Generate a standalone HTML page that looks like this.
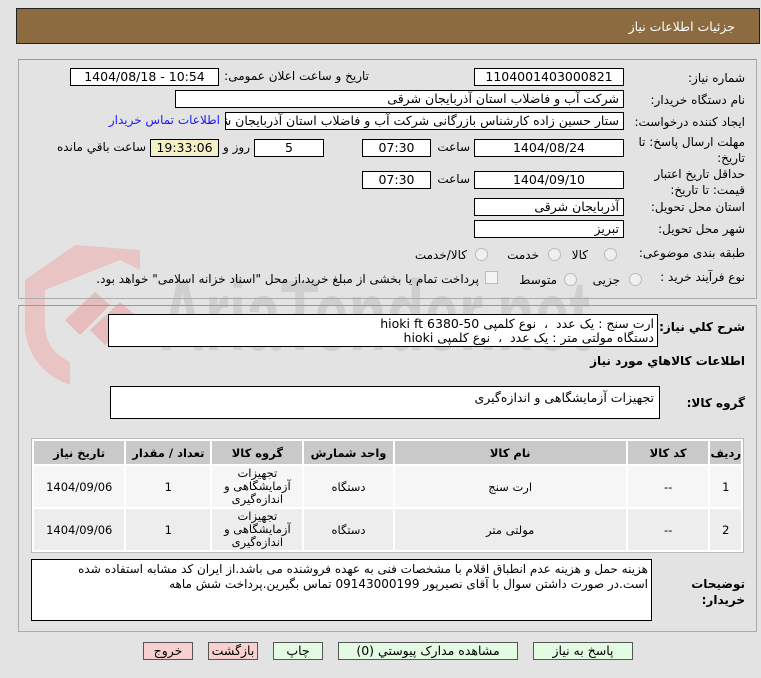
<!DOCTYPE html>
<html><head><meta charset="utf-8">
<style>
*{box-sizing:border-box;margin:0;padding:0}
body{width:761px;height:678px;background:#e3e3e3;font-family:"DejaVu Sans","Liberation Sans","Noto Sans CJK SC",sans-serif;font-size:12px;color:#000;position:relative;overflow:hidden}
.a{position:absolute}
.hdr{left:16px;top:8px;width:744px;height:36px;background:#8b6b3f;border:1px solid #222}
.hdr span{position:absolute;right:24px;top:10px;color:#fff;font-size:12.5px}
.panel{border:1px solid #aaa;border-top-color:#999}
.box{position:absolute;background:#fff;border:1px solid #000;height:18px;font-size:12.5px;line-height:16px;padding:0 4px;white-space:nowrap;overflow:hidden}
.c{text-align:center}
.r{text-align:right;direction:rtl}
.lbl{position:absolute;direction:rtl;text-align:right;font-size:12px;white-space:nowrap}
.rad{position:absolute;width:13px;height:13px;border-radius:50%;border:1px solid #bbb;background:#f0f0f0}
table{border-collapse:separate;border-spacing:2px;background:#fff}
td{text-align:center;font-size:11.5px;direction:rtl}
.btn{position:absolute;top:642px;height:18px;border:1px solid #555;font-size:12.5px;text-align:center;line-height:16px;direction:rtl}
</style></head><body>
<svg class="a" style="left:0;top:0" width="761" height="678">
<path d="M25 280 L25 330 Q30 370 70 385 L70 362 Q45 350 45 325 L45 290 L120 260 L140 270 L140 250 L75 245 Z" fill="#e8c4c4"/>
<path d="M65 320 L95 292 L110 305 L80 335 Z M90 330 L120 302 L135 315 L105 345 Z" fill="#e6bcbc"/>
<text x="160" y="350" font-family="Liberation Sans" font-weight="bold" font-size="100" fill="#cfcfcf" textLength="430" lengthAdjust="spacingAndGlyphs">AriaTender.net</text>
</svg>
<div class="a hdr"><span>جزئیات اطلاعات نیاز</span></div>
<div class="a panel" style="left:18px;top:59px;width:739px;height:240px"></div>
<div class="a panel" style="left:18px;top:305px;width:739px;height:327px"></div>

<div class="lbl" style="right:16px;top:71px">شماره نیاز:</div>
<div class="box c" style="left:474px;top:68px;width:150px">1104001403000821</div>
<div class="lbl" style="right:392px;top:69px">تاریخ و ساعت اعلان عمومی:</div>
<div class="box c" style="left:70px;top:68px;width:149px">1404/08/18 - 10:54</div>

<div class="lbl" style="right:16px;top:93px">نام دستگاه خریدار:</div>
<div class="box r" style="left:175px;top:90px;width:449px">شرکت آب و فاضلاب استان آذربایجان شرقی</div>

<div class="lbl" style="right:16px;top:115px">ایجاد کننده درخواست:</div>
<div class="box r" style="left:225px;top:112px;width:399px">ستار حسین زاده کارشناس بازرگانی شرکت آب و فاضلاب استان آذربایجان شرقی</div>
<div class="lbl" style="right:541px;top:113px;color:#1a1aff">اطلاعات تماس خریدار</div>

<div class="lbl" style="right:16px;top:134px;line-height:16px">مهلت ارسال پاسخ: تا<br>تاریخ:</div>
<div class="box c" style="left:474px;top:139px;width:150px">1404/08/24</div>
<div class="lbl" style="right:291px;top:140px">ساعت</div>
<div class="box c" style="left:362px;top:139px;width:69px">07:30</div>
<div class="box c" style="left:254px;top:139px;width:70px">5</div>
<div class="lbl" style="right:511px;top:140px">روز و</div>
<div class="box c" style="left:150px;top:139px;width:69px;background:#f4f0c6">19:33:06</div>
<div class="lbl" style="right:615px;top:140px">ساعت باقي مانده</div>

<div class="lbl" style="right:16px;top:166px;line-height:16px">حداقل تاریخ اعتبار<br>قیمت: تا تاریخ:</div>
<div class="box c" style="left:474px;top:171px;width:150px">1404/09/10</div>
<div class="lbl" style="right:291px;top:172px">ساعت</div>
<div class="box c" style="left:362px;top:171px;width:69px">07:30</div>

<div class="lbl" style="right:16px;top:200px">استان محل تحویل:</div>
<div class="box r" style="left:474px;top:198px;width:150px">آذربایجان شرقی</div>
<div class="lbl" style="right:16px;top:222px">شهر محل تحویل:</div>
<div class="box r" style="left:474px;top:220px;width:150px">تبریز</div>

<div class="lbl" style="right:16px;top:246px">طبقه بندی موضوعی:</div>
<div class="rad" style="left:604px;top:248px"></div><div class="lbl" style="right:173px;top:248px">کالا</div>
<div class="rad" style="left:548px;top:248px"></div><div class="lbl" style="right:222px;top:248px">خدمت</div>
<div class="rad" style="left:475px;top:248px"></div><div class="lbl" style="right:294px;top:248px">کالا/خدمت</div>

<div class="lbl" style="right:16px;top:270px">نوع فرآیند خرید :</div>
<div class="rad" style="left:629px;top:273px"></div><div class="lbl" style="right:141px;top:273px">جزیی</div>
<div class="rad" style="left:564px;top:273px"></div><div class="lbl" style="right:204px;top:273px">متوسط</div>
<div class="a" style="left:485px;top:271px;width:13px;height:13px;border:1px solid #bbb;background:#f4f4f4"></div>
<div class="lbl" style="right:282px;top:272px">پرداخت تمام یا بخشی از مبلغ خرید،از محل "اسناد خزانه اسلامی" خواهد بود.</div>

<div class="lbl" style="right:16px;top:320px;font-weight:bold">شرح کلي نياز:</div>
<div class="a r" style="left:108px;top:314px;width:550px;height:33px;background:#fff;border:1px solid #000;font-size:12.5px;line-height:14px;padding:2px 3px">ارت سنج : یک عدد &nbsp;، &nbsp;نوع کلمپی hioki ft 6380-50<br>دستگاه مولتی متر : یک عدد &nbsp;، &nbsp;نوع کلمپی hioki</div>
<div class="lbl" style="right:16px;top:354px;font-weight:bold">اطلاعات کالاهاي مورد نياز</div>

<div class="lbl" style="right:16px;top:396px;font-weight:bold">گروه کالا:</div>
<div class="a r" style="left:110px;top:386px;width:550px;height:33px;background:#fff;border:1px solid #000;font-size:12.5px;padding:3px 5px">تجهیزات آزمایشگاهی و اندازه‌گیری</div>

<div class="a" style="left:31px;top:438px;width:713px;height:115px;border:1px solid #bbb;background:#fff">
<table style="width:711px;height:113px;direction:ltr">
<tr style="height:23px;background:#c9c9c9"><td style="width:91px;font-weight:bold">تاریخ نیاز</td><td style="width:85px;font-weight:bold">تعداد / مقدار</td><td style="width:91px;font-weight:bold">گروه کالا</td><td style="width:89px;font-weight:bold">واحد شمارش</td><td style="width:236px;font-weight:bold">نام کالا</td><td style="width:82px;font-weight:bold">کد کالا</td><td style="font-weight:bold">ردیف</td></tr>
<tr style="background:#f6f6f6"><td>1404/09/06</td><td>1</td><td style="line-height:13px">تجهیزات<br>آزمایشگاهی و<br>اندازه‌گیری</td><td>دستگاه</td><td>ارت سنج</td><td>--</td><td>1</td></tr>
<tr style="background:#ededed"><td>1404/09/06</td><td>1</td><td style="line-height:13px">تجهیزات<br>آزمایشگاهی و<br>اندازه‌گیری</td><td>دستگاه</td><td>مولتی متر</td><td>--</td><td>2</td></tr>
</table></div>

<div class="lbl" style="right:16px;top:576px;font-weight:bold;line-height:16px">توضیحات<br>خریدار:</div>
<div class="a r" style="left:31px;top:559px;width:621px;height:62px;background:#fff;border:1px solid #000;font-size:12px;line-height:15px;padding:2px 3px">هزینه حمل و هزینه عدم انطباق اقلام با مشخصات فنی به عهده فروشنده می باشد.از ایران کد مشابه استفاده شده است.در صورت داشتن سوال با آقای نصیرپور 09143000199 تماس بگیرین.پرداخت شش ماهه</div>

<div class="btn" style="left:143px;width:50px;background:#f8d0d0">خروج</div>
<div class="btn" style="left:208px;width:50px;background:#f8d0d0">بازگشت</div>
<div class="btn" style="left:273px;width:50px;background:#e2fbe2">چاپ</div>
<div class="btn" style="left:338px;width:180px;background:#e2fbe2">مشاهده مدارک پیوستي (0)</div>
<div class="btn" style="left:533px;width:100px;background:#e2fbe2">پاسخ به نیاز</div>
</body></html>
